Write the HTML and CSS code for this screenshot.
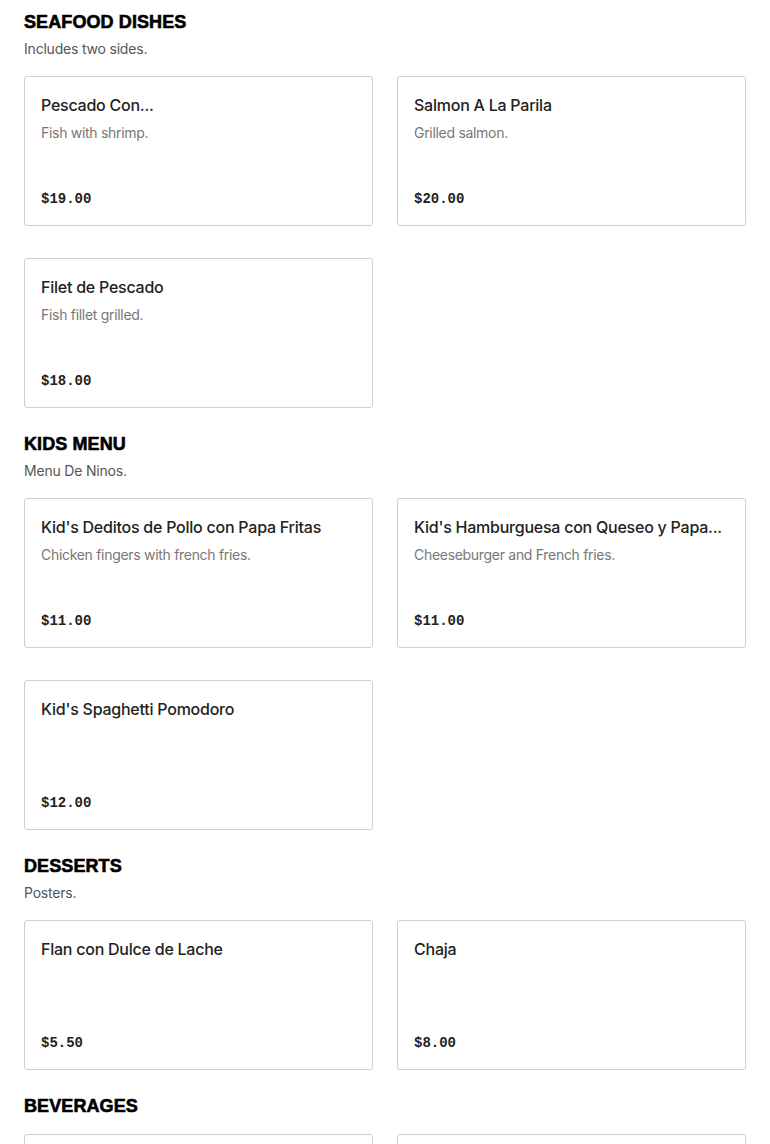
FILE: index.html
```html
<!DOCTYPE html>
<html>
<head>
<meta charset="utf-8">
<link rel="stylesheet" href="styles.css">
</head>
<body>
<main class="menu">
  <section class="section">
    <header class="section-head">
      <h2 class="section-title">SEAFOOD DISHES</h2>
      <p class="section-sub">Includes two sides.</p>
    </header>
    <div class="grid">
      <div class="card"><h3 class="item-name">Pescado Con...</h3><p class="item-desc">Fish with shrimp.</p><div class="price">$19.00</div></div>
      <div class="card"><h3 class="item-name">Salmon A La Parila</h3><p class="item-desc">Grilled salmon.</p><div class="price">$20.00</div></div>
      <div class="card"><h3 class="item-name">Filet de Pescado</h3><p class="item-desc">Fish fillet grilled.</p><div class="price">$18.00</div></div>
    </div>
  </section>
  <section class="section">
    <header class="section-head">
      <h2 class="section-title">KIDS MENU</h2>
      <p class="section-sub">Menu De Ninos.</p>
    </header>
    <div class="grid">
      <div class="card"><h3 class="item-name">Kid's Deditos de Pollo con Papa Fritas</h3><p class="item-desc">Chicken fingers with french fries.</p><div class="price">$11.00</div></div>
      <div class="card"><h3 class="item-name">Kid's Hamburguesa con Queseo y Papa...</h3><p class="item-desc">Cheeseburger and French fries.</p><div class="price">$11.00</div></div>
      <div class="card"><h3 class="item-name">Kid's Spaghetti Pomodoro</h3><div class="price">$12.00</div></div>
    </div>
  </section>
  <section class="section">
    <header class="section-head">
      <h2 class="section-title">DESSERTS</h2>
      <p class="section-sub">Posters.</p>
    </header>
    <div class="grid">
      <div class="card"><h3 class="item-name">Flan con Dulce de Lache</h3><div class="price">$5.50</div></div>
      <div class="card"><h3 class="item-name">Chaja</h3><div class="price">$8.00</div></div>
    </div>
  </section>
  <section class="section">
    <header class="section-head">
      <h2 class="section-title">BEVERAGES</h2>
    </header>
    <div class="grid">
      <div class="card"><h3 class="item-name">Soft Drinks</h3><div class="price">$3.00</div></div>
      <div class="card"><h3 class="item-name">Coffee</h3><div class="price">$3.00</div></div>
    </div>
  </section>
</main>
</body>
</html>
```

FILE: styles.css
```css
* { box-sizing: border-box; }
html, body { margin: 0; padding: 0; background: #fff; }
body {
  font-family: "Inter", "Liberation Sans", sans-serif;
  color: #222;
}
.menu {
  padding: 10px 24px 40px;
  display: flex;
  flex-direction: column;
  gap: 24px;
}
.section-head {
  display: flex;
  flex-direction: column;
  gap: 5px;
  margin-bottom: 16px;
}
.section-title {
  margin: 0;
  font-family: "Liberation Sans", Arial, sans-serif;
  font-weight: 900;
  font-size: 18px;
  line-height: 24px;
  letter-spacing: 0.1px;
  color: #000;
  -webkit-text-stroke: 0.6px #000;
}
.section-sub {
  margin: 0 0 1px;
  font-size: 14px;
  line-height: 20px;
  letter-spacing: -0.2px;
  color: #555;
}
.grid {
  display: grid;
  grid-template-columns: minmax(0, 1fr) minmax(0, 1fr);
  column-gap: 24px;
  row-gap: 32px;
}
.card {
  height: 150px;
  border: 1px solid #cfcfcf;
  border-radius: 3px;
  padding: 16px 16px 14px;
  display: flex;
  flex-direction: column;
  min-width: 0;
}
.item-name {
  margin: 0;
  font-size: 16px;
  line-height: 24px;
  font-weight: 500;
  letter-spacing: -0.24px;
  color: #222;
  white-space: nowrap;
  overflow: hidden;
}
.item-desc {
  margin: 6px 0 0;
  font-size: 14px;
  line-height: 20px;
  letter-spacing: -0.3px;
  color: #777;
}
.price {
  margin-top: auto;
  font-family: "Liberation Mono", "DejaVu Sans Mono", monospace;
  font-weight: 700;
  font-size: 14px;
  line-height: 24px;
  color: #222;
}
```
